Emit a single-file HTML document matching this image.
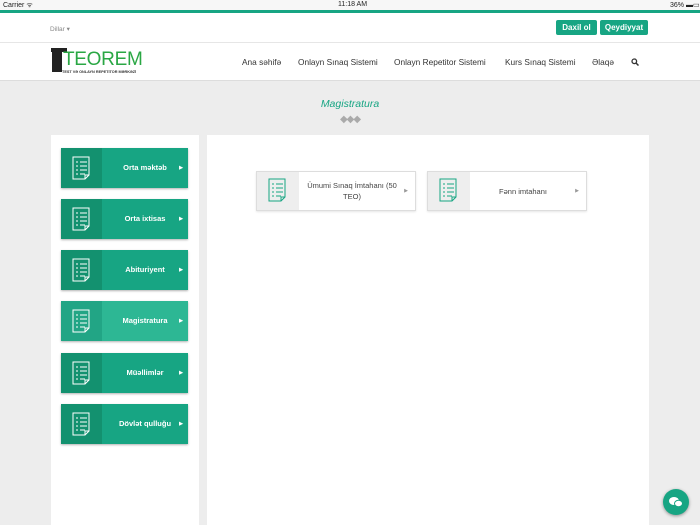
<!DOCTYPE html>
<html><head><meta charset="utf-8"><style>
*{margin:0;padding:0;box-sizing:border-box}
body{width:700px;height:525px;overflow:hidden;background:#ededed;font-family:"Liberation Sans",sans-serif;position:relative}
.abs{position:absolute}
.sb{top:0;left:0;width:700px;height:11px;background:#f7f7f7;font-size:7px;color:#222}
.gl{top:10px;left:0;width:700px;height:3px;background:#17a583}
.top{top:13px;left:0;width:700px;height:30px;background:#fff;border-bottom:1px solid #e6e6e6}
.nav{top:43px;left:0;width:700px;height:38px;background:#fff;border-bottom:1px solid #ddd}
.btn{background:#17a583;color:#fff;font-size:8px;font-weight:bold;border-radius:2px;text-align:center;line-height:15px;height:15px}
.nl{font-size:8.3px;color:#333;top:57px}
.panel{background:#fff;top:135px;bottom:0}
.lb{left:61px;width:127px;height:40px;background:#17a583;color:#fff;font-size:7.5px;font-weight:bold;box-shadow:0 1px 2px rgba(0,0,0,.3)}
.lb .ic{position:absolute;left:0;top:0;width:41px;height:40px;background:#13916f}
.lb .t{position:absolute;left:41px;right:0;top:0;line-height:40px;text-align:center}
.lb .ar{position:absolute;right:5px;top:0;line-height:40px;font-size:5px}
.lb svg,.card svg{position:absolute;left:11px;top:8px}
.card{top:171px;width:160px;height:40px;background:#fff;border:1px solid #ddd;box-shadow:0 1px 2px rgba(0,0,0,.1);font-size:7.5px;color:#444}
.card .ic{position:absolute;left:0;top:0;width:42px;height:38px;background:#eee}
.card .t{position:absolute;left:46px;right:14px;top:0;height:38px;display:flex;align-items:center;justify-content:center;text-align:center;line-height:11px}
.card .ar{position:absolute;right:7px;top:0;line-height:38px;font-size:5px;color:#999}
</style></head><body>
<div class="abs sb"><span class="abs" style="left:3px;top:1px">Carrier ᯤ</span><span class="abs" style="left:338px;top:1px">11:18 AM</span><span class="abs" style="left:670px;top:1px">36% ▬▭</span></div>
<div class="abs gl"></div>
<div class="abs top"><span class="abs" style="left:50px;top:12px;font-size:6.5px;color:#888">Dillar ▾</span>
<div class="abs btn" style="left:556px;top:7px;width:41px">Daxil ol</div>
<div class="abs btn" style="left:600px;top:7px;width:48px">Qeydiyyat</div></div>
<div class="abs nav">
<div class="abs" style="left:52px;top:5px;width:10px;height:24px;background:#222"></div>
<div class="abs" style="left:51px;top:5px;width:16px;height:4px;background:#222"></div>
<span class="abs" style="left:63px;top:6px;font-size:19px;color:#2aa744;letter-spacing:-.3px">TEOREM</span>
<span class="abs" style="left:62px;top:27px;font-size:3.8px;color:#333;font-weight:bold">TEST VƏ ONLAYN REPETITOR MƏRKƏZİ</span>
</div>
<span class="abs nl" style="left:242px">Ana səhifə</span>
<span class="abs nl" style="left:298px">Onlayn Sınaq Sistemi</span>
<span class="abs nl" style="left:394px">Onlayn Repetitor Sistemi</span>
<span class="abs nl" style="left:505px">Kurs Sınaq Sistemi</span>
<span class="abs nl" style="left:592px">Əlaqə</span>
<svg class="abs" style="left:631px;top:58px" width="8" height="8"><circle cx="3.3" cy="3.3" r="2.3" fill="none" stroke="#333" stroke-width="1.3"/><path d="M5 5l2.5 2.5" stroke="#333" stroke-width="1.5"/></svg>
<div class="abs" style="left:0;width:700px;top:98px;text-align:center;font-size:10.5px;font-style:italic;color:#17a583">Magistratura</div>
<div class="abs" style="left:0;width:700px;top:114px;text-align:center;font-size:10px;color:#aaa;letter-spacing:-1px">◆◆◆</div>
<div class="abs panel" style="left:51px;width:148px"></div>
<div class="abs panel" style="left:207px;width:442px"></div>
<svg width="0" height="0" style="position:absolute"><defs><g id="doc" fill="none" stroke-width="1"><path d="M1 1h16v18l-4 4H1z M17 19h-4v4"/><path d="M4 6h2M8 6h7M4 10h2M8 10h7M4 14h2M8 14h7M4 18h2M8 18h5"/></g></defs></svg>
<div class="abs lb" style="top:148px"><div class="ic"><svg width="20" height="25" stroke="#fff"><use href="#doc"/></svg></div><div class="t">Orta məktəb</div><div class="ar">▶</div></div>
<div class="abs lb" style="top:199px"><div class="ic"><svg width="20" height="25" stroke="#fff"><use href="#doc"/></svg></div><div class="t">Orta ixtisas</div><div class="ar">▶</div></div>
<div class="abs lb" style="top:250px"><div class="ic"><svg width="20" height="25" stroke="#fff"><use href="#doc"/></svg></div><div class="t">Abituriyent</div><div class="ar">▶</div></div>
<div class="abs lb" style="top:301px;background:#2db794"><div class="ic" style="background:#22a585"><svg width="20" height="25" stroke="#fff"><use href="#doc"/></svg></div><div class="t">Magistratura</div><div class="ar">▶</div></div>
<div class="abs lb" style="top:353px"><div class="ic"><svg width="20" height="25" stroke="#fff"><use href="#doc"/></svg></div><div class="t">Müəllimlər</div><div class="ar">▶</div></div>
<div class="abs lb" style="top:404px"><div class="ic"><svg width="20" height="25" stroke="#fff"><use href="#doc"/></svg></div><div class="t">Dövlət qulluğu</div><div class="ar">▶</div></div>
<div class="abs card" style="left:256px"><div class="ic"><svg width="20" height="25" stroke="#17a583" style="top:6px"><use href="#doc"/></svg></div><div class="t">Ümumi Sınaq İmtahanı (50 TEO)</div><div class="ar">▶</div></div>
<div class="abs card" style="left:427px"><div class="ic"><svg width="20" height="25" stroke="#17a583" style="top:6px"><use href="#doc"/></svg></div><div class="t">Fənn imtahanı</div><div class="ar">▶</div></div>
<div class="abs" style="left:663px;top:489px;width:26px;height:26px;border-radius:50%;background:#17a583;box-shadow:0 1px 3px rgba(0,0,0,.4)"><svg width="26" height="26"><ellipse cx="11" cy="12" rx="5" ry="4" fill="#fff"/><ellipse cx="15.5" cy="14.5" rx="4" ry="3.2" fill="#fff" stroke="#17a583"/></svg></div>
</body></html>
